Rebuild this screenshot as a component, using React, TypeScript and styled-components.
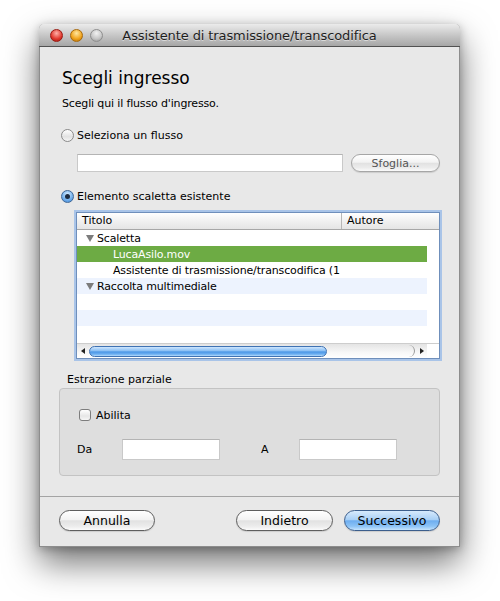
import React from "react";
import styled, { createGlobalStyle, css } from "styled-components";

const GlobalStyle = createGlobalStyle`
  html, body {
    margin: 0;
    background: #ffffff;
  }
  body {
    font-family: "DejaVu Sans", sans-serif;
    font-size: 11px;
    color: #000;
  }
`;

const Desktop = styled.div`
  min-height: 601px;
  box-sizing: border-box;
  padding: 24px 0 0 39px;
  overflow: hidden;
`;

const Window = styled.div`
  width: 421px;
  height: 523px;
  box-sizing: border-box;
  display: flex;
  flex-direction: column;
  background: #e8e8e8;
  border: 1px solid #8d8d8d;
  border-top: none;
  border-radius: 5px 5px 0 0;
  box-shadow: 0 16px 34px rgba(0, 0, 0, 0.55), 0 2px 10px rgba(0, 0, 0, 0.25);
`;

const TitleBar = styled.div`
  height: 22px;
  margin: 0 -1px;
  display: grid;
  grid-template-columns: 1fr auto 1fr;
  align-items: center;
  background: linear-gradient(#ebebeb, #c4c4c4 55%, #a6a6a6);
  border-bottom: 1px solid #515151;
  border-radius: 5px 5px 0 0;
`;

const Lights = styled.div`
  display: flex;
  gap: 7px;
  padding-left: 11px;
`;

const lightColors = {
  close: ["#ffb0a8", "#e0372c", "#9a1a12"],
  min: ["#ffe7a0", "#f0a21a", "#a8690a"],
  zoom: ["#f2f2f2", "#c4c4c4", "#8e8e8e"],
};

const Light = styled.span<{ $kind: keyof typeof lightColors }>`
  width: 13px;
  height: 13px;
  border-radius: 50%;
  box-sizing: border-box;
  ${({ $kind }) => {
    const [a, b, c] = lightColors[$kind];
    return css`
      background: radial-gradient(circle at 50% 30%, ${a} 0%, ${b} 60%, ${c} 100%);
      border: 1px solid ${c};
    `;
  }}
`;

const WindowTitle = styled.div`
  font-size: 13px;
  letter-spacing: -0.1px;
  color: #1e1e1e;
  text-shadow: 0 1px 0 rgba(255, 255, 255, 0.5);
  white-space: nowrap;
`;

const Content = styled.div`
  flex: 1;
  display: flex;
  flex-direction: column;
  padding: 0 19px 0 19px;
`;

const Heading = styled.h1`
  margin: 21px 0 0 3px;
  font-size: 17px;
  line-height: 20px;
  font-weight: normal;
`;

const Intro = styled.p`
  margin: 9px 0 0 3px;
  line-height: 14px;
  letter-spacing: -0.15px;
`;

const RadioRow = styled.label<{ $top: number }>`
  display: flex;
  align-items: center;
  gap: 3px;
  margin: ${({ $top }) => $top}px 0 0 2px;
  height: 16px;
`;

const Radio = styled.span<{ $checked?: boolean }>`
  position: relative;
  width: 13px;
  height: 13px;
  border-radius: 50%;
  box-sizing: border-box;
  border: 1px solid ${({ $checked }) => ($checked ? "#3f6795" : "#8a8a8a")};
  background: ${({ $checked }) =>
    $checked
      ? "radial-gradient(circle at 50% 30%, #d6ecff 0%, #7fb8ef 50%, #3a85d8 100%)"
      : "linear-gradient(#ffffff, #e2e2e2 60%, #f5f5f5)"};
  &::after {
    content: "";
    display: ${({ $checked }) => ($checked ? "block" : "none")};
    position: absolute;
    left: 3px;
    top: 3px;
    width: 5px;
    height: 5px;
    border-radius: 50%;
    background: #1c2b40;
  }
`;

const FieldRow = styled.div`
  display: flex;
  gap: 8px;
  margin: 11px 0 0 18px;
`;

const TextField = styled.div<{ $width: number; $height: number }>`
  width: ${({ $width }) => $width}px;
  height: ${({ $height }) => $height}px;
  box-sizing: border-box;
  background: #fff;
  border: 1px solid #c9c9c9;
  border-top-color: #b4b4b4;
`;

const PillButton = styled.button<{ $width: number; $primary?: boolean; $disabled?: boolean; $height?: number }>`
  width: ${({ $width }) => $width}px;
  height: ${({ $height }) => $height ?? 21}px;
  padding: 0;
  box-sizing: border-box;
  border-radius: 11px;
  font-family: "DejaVu Sans", sans-serif;
  font-size: ${({ $disabled }) => ($disabled ? "11px" : "12.5px")};
  color: ${({ $disabled }) => ($disabled ? "#555" : "#000")};
  border: 1px solid ${({ $primary, $disabled }) => ($primary ? "#3c5e8c" : $disabled ? "#a6a6a6" : "#5e5e5e")};
  background: ${({ $primary }) =>
    $primary
      ? "linear-gradient(#d7eafc, #a9d0f6 45%, #6eaef0 52%, #8cc3f6 80%, #c6e4fd)"
      : "linear-gradient(#ffffff, #f3f3f3 45%, #e2e2e2 52%, #ececec 80%, #fbfbfb)"};
  box-shadow: 0 1px 1px rgba(0, 0, 0, 0.12);
`;

const TableFrame = styled.div`
  margin: 8px 0 0 17px;
  width: 364px;
  height: 147px;
  box-sizing: border-box;
  display: flex;
  flex-direction: column;
  border: 1px solid #6f8fbb;
  box-shadow: 0 0 0 2px #a9c4e8;
  background: #fff;
  overflow: hidden;
`;

const TableHeader = styled.div`
  display: flex;
  height: 17px;
  box-sizing: border-box;
  border-bottom: 1px solid #a7a7a7;
  background: linear-gradient(#ffffff, #f1f1f1 50%, #e5e5e5);
`;

const HeaderCell = styled.div<{ $width?: number }>`
  ${({ $width }) => ($width ? `width: ${$width}px; border-right: 1px solid #b7b7b7;` : "flex: 1;")}
  box-sizing: border-box;
  padding-left: 5px;
  line-height: 16px;
`;

const TableBody = styled.div`
  flex: 1;
  display: flex;
  min-height: 0;
`;

const Rows = styled.div`
  flex: 1;
  overflow: hidden;
`;

const Row = styled.div<{ $stripe?: boolean; $selected?: boolean }>`
  display: flex;
  align-items: center;
  height: 16px;
  letter-spacing: -0.15px;
  background: ${({ $stripe, $selected }) => ($selected ? "#6dab44" : $stripe ? "#edf3fe" : "#fff")};
  color: ${({ $selected }) => ($selected ? "#fff" : "#000")};
`;

const TitleCell = styled.div<{ $indent: number }>`
  width: 265px;
  display: flex;
  align-items: center;
  padding-left: ${({ $indent }) => $indent}px;
  box-sizing: border-box;
  white-space: nowrap;
  overflow: hidden;
`;

const Disclosure = styled.span`
  width: 0;
  height: 0;
  margin-right: 3px;
  border-left: 4px solid transparent;
  border-right: 4px solid transparent;
  border-top: 7px solid #7c7c7c;
`;

const VScroll = styled.div`
  width: 12px;
  background: #fff;
`;

const HScroll = styled.div`
  display: flex;
  height: 14px;
  border-top: 1px solid #cdcdcd;
`;

const ScrollTrack = styled.div`
  flex: 1;
  display: flex;
  align-items: center;
  background: linear-gradient(#e4e4e4, #f7f7f7 60%, #ffffff);
`;

const ArrowBox = styled.div<{ $width: number }>`
  width: ${({ $width }) => $width}px;
  display: flex;
  align-items: center;
  justify-content: center;
`;

const Arrow = styled.span<{ $dir: "left" | "right" }>`
  width: 0;
  height: 0;
  border-top: 3px solid transparent;
  border-bottom: 3px solid transparent;
  ${({ $dir }) => ($dir === "left" ? "border-right: 4px solid #222;" : "border-left: 4px solid #222;")}
`;

const ScrollThumb = styled.div`
  height: 11px;
  box-sizing: border-box;
  border-radius: 6px;
  border: 1px solid #3f72b3;
  background: linear-gradient(#cfe6fd, #8fc2f5 40%, #4c97e6 55%, #6eb0f2 80%, #b4dafc);
`;

const TrackFill = styled.div`
  flex: 1;
  align-self: stretch;
  margin: 1px 2px 1px 0;
  border-right: 1px solid #9a9a9a;
  border-radius: 0 6px 6px 0;
`;

const Corner = styled.div`
  width: 12px;
  background: #fff;
`;

const GroupLabel = styled.div`
  margin: 14px 0 0 8px;
  line-height: 14px;
`;

const GroupBox = styled.div`
  margin-top: 1px;
  height: 88px;
  box-sizing: border-box;
  border: 1px solid #c3c3c3;
  border-radius: 4px;
  background: #dedede;
  padding: 19px 0 0 17px;
  display: flex;
  flex-direction: column;
`;

const CheckRow = styled.label`
  display: flex;
  align-items: center;
  gap: 5px;
  height: 14px;
  margin-left: 2px;
`;

const Checkbox = styled.span`
  width: 12px;
  height: 12px;
  box-sizing: border-box;
  border: 1px solid #7d7d7d;
  border-radius: 3px;
  background: linear-gradient(#ffffff, #e6e6e6 60%, #f6f6f6);
`;

const RangeRow = styled.div`
  display: flex;
  align-items: center;
  margin-top: 17px;
`;

const RangeLabel = styled.span<{ $width: number }>`
  width: ${({ $width }) => $width}px;
`;

const Gap = styled.span<{ $width: number }>`
  width: ${({ $width }) => $width}px;
`;

const Footer = styled.div`
  height: 50px;
  box-sizing: border-box;
  border-top: 1px solid #a4a4a4;
  display: flex;
  gap: 11px;
  padding: 13px 19px 0 19px;
`;

const Spacer = styled.div`
  flex: 1;
`;

type Item = { label?: string; level?: number; selected?: boolean };

const items: Item[] = [
  { label: "Scaletta", level: 0 },
  { label: "LucaAsilo.mov", level: 1, selected: true },
  { label: "Assistente di trasmissione/transcodifica (1", level: 1 },
  { label: "Raccolta multimediale", level: 0 },
  {},
  {},
  {},
];

export default function App() {
  return (
    <Desktop>
      <GlobalStyle />
      <Window>
        <TitleBar>
          <Lights>
            <Light $kind="close" />
            <Light $kind="min" />
            <Light $kind="zoom" />
          </Lights>
          <WindowTitle>Assistente di trasmissione/transcodifica</WindowTitle>
          <div />
        </TitleBar>
        <Content>
          <Heading>Scegli ingresso</Heading>
          <Intro>Scegli qui il flusso d'ingresso.</Intro>
          <RadioRow $top={16}>
            <Radio />
            Seleziona un flusso
          </RadioRow>
          <FieldRow>
            <TextField $width={266} $height={18} />
            <PillButton $width={89} $height={18} $disabled>
              Sfoglia...
            </PillButton>
          </FieldRow>
          <RadioRow $top={16}>
            <Radio $checked />
            Elemento scaletta esistente
          </RadioRow>
          <TableFrame>
            <TableHeader>
              <HeaderCell $width={265}>Titolo</HeaderCell>
              <HeaderCell>Autore</HeaderCell>
            </TableHeader>
            <TableBody>
              <Rows>
                {items.map((it, i) => (
                  <Row key={i} $stripe={i % 2 === 1} $selected={it.selected}>
                    {it.label && (
                      <TitleCell $indent={it.level === 0 ? 9 : 36}>
                        {it.level === 0 && <Disclosure />}
                        {it.label}
                      </TitleCell>
                    )}
                  </Row>
                ))}
              </Rows>
              <VScroll />
            </TableBody>
            <HScroll>
              <ScrollTrack>
                <ArrowBox $width={12}>
                  <Arrow $dir="left" />
                </ArrowBox>
                <ScrollThumb style={{ width: 238 }} />
                <TrackFill />
                <ArrowBox $width={10}>
                  <Arrow $dir="right" />
                </ArrowBox>
              </ScrollTrack>
              <Corner />
            </HScroll>
          </TableFrame>
          <GroupLabel>Estrazione parziale</GroupLabel>
          <GroupBox>
            <CheckRow>
              <Checkbox />
              Abilita
            </CheckRow>
            <RangeRow>
              <RangeLabel $width={45}>Da</RangeLabel>
              <TextField $width={98} $height={21} />
              <Gap $width={41} />
              <RangeLabel $width={38}>A</RangeLabel>
              <TextField $width={98} $height={21} />
            </RangeRow>
          </GroupBox>
        </Content>
        <Footer>
          <PillButton $width={96}>Annulla</PillButton>
          <Spacer />
          <PillButton $width={97}>Indietro</PillButton>
          <PillButton $width={96} $primary>
            Successivo
          </PillButton>
        </Footer>
      </Window>
    </Desktop>
  );
}
